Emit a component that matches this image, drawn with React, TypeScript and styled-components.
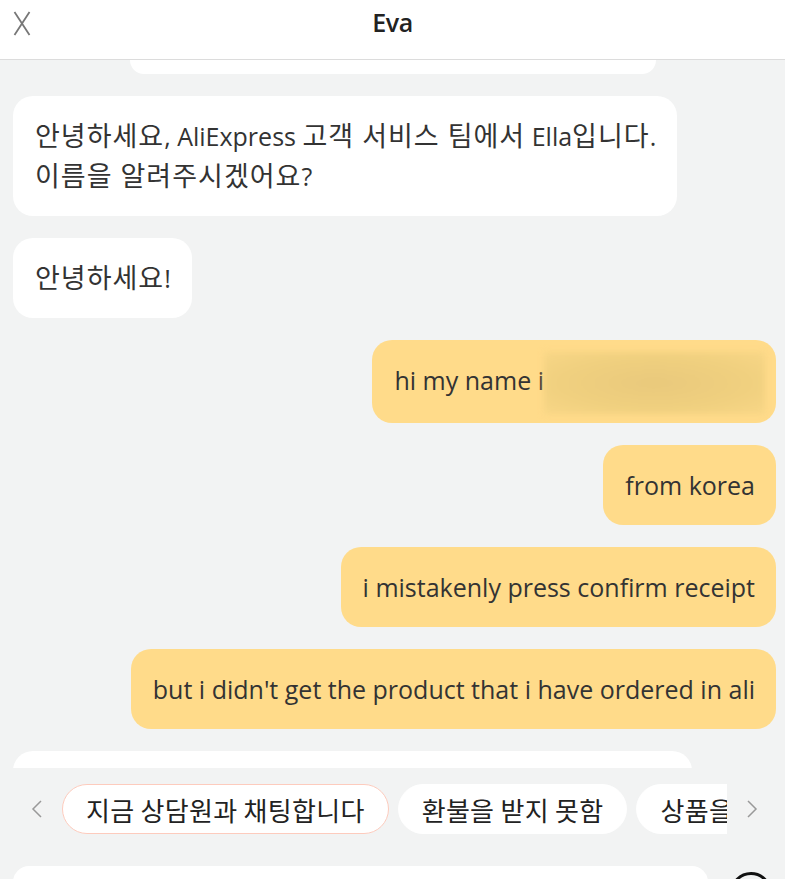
import React from "react";
import styled, { createGlobalStyle } from "styled-components";

const Global = createGlobalStyle`
  html, body { margin: 0; padding: 0; background: #f2f3f3; }
  body { font-family: "Open Sans", "Noto Sans CJK KR", sans-serif; color: #333; }
  * { box-sizing: border-box; }
`;

const Page = styled.div`
  width: 785px;
  height: 879px;
  display: flex;
  flex-direction: column;
  overflow: hidden;
  background: #f2f3f3;
`;

const Header = styled.header`
  height: 60px;
  flex: none;
  background: #fff;
  border-bottom: 1px solid #dcdcdc;
  display: flex;
  align-items: center;
  justify-content: center;
  position: relative;
`;

const CloseBtn = styled.button`
  position: absolute;
  left: 12px;
  top: 9px;
  width: 20px;
  height: 28px;
  padding: 0;
  border: none;
  background: none;
  display: flex;
  align-items: center;
  justify-content: center;
`;

const Title = styled.h1`
  margin: 0 0 16px;
  font-family: "Open Sans", sans-serif;
  font-weight: 600;
  font-size: 25px;
  letter-spacing: -0.5px;
  color: #222;
`;

const Messages = styled.div`
  height: 708px;
  flex: none;
  overflow: hidden;
  display: flex;
  flex-direction: column;
  gap: 22px;
  padding: 0 9px 0 13px;
`;

const TopCard = styled.div`
  align-self: center;
  width: 526px;
  height: 14px;
  margin-left: -4px;
  flex: none;
  background: #fff;
  border-radius: 0 0 16px 16px;
`;

const Bubble = styled.div<{ $mine?: boolean }>`
  flex: none;
  align-self: ${(p) => (p.$mine ? "flex-end" : "flex-start")};
  max-width: 679px;
  background: ${(p) => (p.$mine ? "#ffdb8a" : "#fff")};
  border-radius: 20px;
  padding: 20px 21px 20px 22px;
  font-size: 25px;
  line-height: 40px;
  color: #333;
  white-space: pre-line;
`;

const Ko = styled.span`
  font-size: 27px;
  letter-spacing: 1px;
`;

const Blurred = styled.span`
  display: inline-block;
  vertical-align: middle;
  width: 221px;
  height: 62px;
  margin: -11px -10px -11px 0;
  background: radial-gradient(ellipse at 50% 50%, #e9c97c 0%, #f0d07f 60%, #f8d686 100%);
  filter: blur(3px);
`;

const QuickBar = styled.div`
  height: 82px;
  flex: none;
  display: flex;
  align-items: center;
  padding: 0 0 0 27px;
`;

const Arrow = styled.button`
  width: 20px;
  height: 30px;
  flex: none;
  padding: 0;
  border: none;
  background: none;
  display: flex;
  align-items: center;
  justify-content: center;
`;

const ChipTrack = styled.div`
  width: 665px;
  flex: none;
  overflow: hidden;
  display: flex;
  gap: 9px;
  margin: 0 15px 0 15px;
`;

const Chip = styled.button<{ $active?: boolean }>`
  flex: none;
  height: 50px;
  padding: 0 23px;
  border-radius: 25px;
  background: #fff;
  border: 1px solid ${(p) => (p.$active ? "#fdcbbd" : "#fff")};
  font-family: "Noto Sans CJK KR", sans-serif;
  font-size: 26px;
  color: #222;
  letter-spacing: 0.3px;
  white-space: nowrap;
`;

const Composer = styled.div`
  flex: 1;
  display: flex;
  padding: 16px 13px 0 13px;
  gap: 22px;
`;

const InputBox = styled.div`
  width: 695px;
  height: 60px;
  background: #fff;
  border-radius: 16px;
`;

const RoundIcon = styled.div`
  margin-top: 6px;
  width: 42px;
  height: 42px;
  border-radius: 50%;
  border: 3px solid #111;
`;

const Chevron = ({ dir }: { dir: "l" | "r" }) => (
  <svg width="12" height="18" viewBox="0 0 12 18">
    <path
      d={dir === "l" ? "M10 1 L2 9 L10 17" : "M2 1 L10 9 L2 17"}
      fill="none"
      stroke="#999"
      strokeWidth="1.5"
    />
  </svg>
);

export default function App() {
  return (
    <Page>
      <Global />
      <Header>
        <CloseBtn aria-label="close">
          <svg width="18" height="25" viewBox="0 0 18 25">
            <path d="M1.5 1 L16.5 24 M16.5 1 L1.5 24" stroke="#777" strokeWidth="1.8" fill="none" />
          </svg>
        </CloseBtn>
        <Title>Eva</Title>
      </Header>
      <Messages>
        <TopCard />
        <Bubble>
          <Ko>안녕하세요</Ko>, AliExpress <Ko>고객 서비스 팀에서</Ko> Ella<Ko>입니다</Ko>.
          {"\n"}
          <Ko>이름을 알려주시겠어요</Ko>?
        </Bubble>
        <Bubble>
          <Ko>안녕하세요</Ko>!
        </Bubble>
        <Bubble $mine>
          hi my name i<Blurred />
        </Bubble>
        <Bubble $mine>from korea</Bubble>
        <Bubble $mine>i mistakenly press confirm receipt</Bubble>
        <Bubble $mine>but i didn't get the product that i have ordered in ali</Bubble>
        <Bubble style={{ width: 679 }}>&nbsp;</Bubble>
      </Messages>
      <QuickBar>
        <Arrow aria-label="prev">
          <Chevron dir="l" />
        </Arrow>
        <ChipTrack>
          <Chip $active>지금 상담원과 채팅합니다</Chip>
          <Chip>환불을 받지 못함</Chip>
          <Chip>상품을 받지 못함</Chip>
        </ChipTrack>
        <Arrow aria-label="next">
          <Chevron dir="r" />
        </Arrow>
      </QuickBar>
      <Composer>
        <InputBox />
        <RoundIcon />
      </Composer>
    </Page>
  );
}
